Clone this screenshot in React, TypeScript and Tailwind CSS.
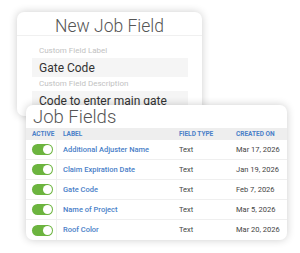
const rows = [
  { label: 'Additional Adjuster Name', type: 'Text', date: 'Mar 17, 2026' },
  { label: 'Claim Expiration Date', type: 'Text', date: 'Jan 19, 2026' },
  { label: 'Gate Code', type: 'Text', date: 'Feb 7, 2026' },
  { label: 'Name of Project', type: 'Text', date: 'Mar 5, 2026' },
  { label: 'Roof Color', type: 'Text', date: 'Mar 20, 2026' },
]

const Toggle = () => (
  <div className="flex h-[11px] w-[21px] items-center justify-end rounded-full bg-[#6cb43f] pr-[1px]">
    <div className="h-[9px] w-[9px] rounded-full bg-white" />
  </div>
)

const App = () => {
  return (
    <div
      className="h-[253px] w-[300px] overflow-hidden bg-white"
      style={{ fontFamily: 'Roboto, "Liberation Sans", sans-serif' }}
    >
      {/* new job field card */}
      <div className="ml-[17px] mt-[12px] h-[104px] w-[185px] rounded-[7px] bg-white shadow-[0_0_8px_rgba(0,0,0,0.2)]">
        <div className="flex h-[24px] items-end justify-center border-b border-[#f0f0f0] text-[17.5px] font-light leading-none text-[#555]">
          New Job Field
        </div>
        <div className="px-[15px] pr-[14px]">
          <div className="mt-[11px] pl-[7px] text-[8px] leading-none text-[#c2c2c2]">Custom Field Label</div>
          <div className="mt-[3px] flex h-[19px] items-center bg-[#f5f5f5] pl-[7px] text-[12px] text-[#333]">
            Gate Code
          </div>
          <div className="mt-[3px] pl-[7px] text-[8px] leading-none text-[#c2c2c2]">Custom Field Description</div>
          <div className="mt-[3px] flex h-[19px] items-center bg-[#f5f5f5] pl-[7px] text-[12px] text-[#333]">
            Code to enter main gate
          </div>
        </div>
      </div>

      {/* job fields card */}
      <div className="relative ml-[26px] mt-[-11px] w-[261px] overflow-hidden rounded-[7px] bg-white shadow-[0_0_8px_rgba(0,0,0,0.2)]">
        <div className="flex h-[23px] items-end pb-[2px] pl-[7px] text-[18.5px] font-light leading-none text-[#555]">
          Job Fields
        </div>
        <div className="flex h-[12px] items-center bg-[#eeeeee] text-[6.5px] font-bold uppercase leading-none text-[#4a80c8]">
          <div className="w-[31px] pl-[6px]">Active</div>
          <div className="w-[122px] pl-[6px]">Label</div>
          <div className="w-[57px]">Field Type</div>
          <div>Created On</div>
        </div>
        {rows.map((r, i) => (
          <div
            key={r.label}
            className={`flex h-[20px] items-center text-[7.5px] leading-none ${i < rows.length - 1 ? 'border-b border-[#efefef]' : ''}`}
          >
            <div className="flex h-full w-[31px] items-center border-r border-[#efefef] pl-[6px]">
              <Toggle />
            </div>
            <div className="w-[122px] pl-[6px] font-medium text-[#4a80c8]">{r.label}</div>
            <div className="w-[57px] text-[#444]">{r.type}</div>
            <div className="text-[#444]">{r.date}</div>
          </div>
        ))}
      </div>
    </div>
  )
}

export default App
